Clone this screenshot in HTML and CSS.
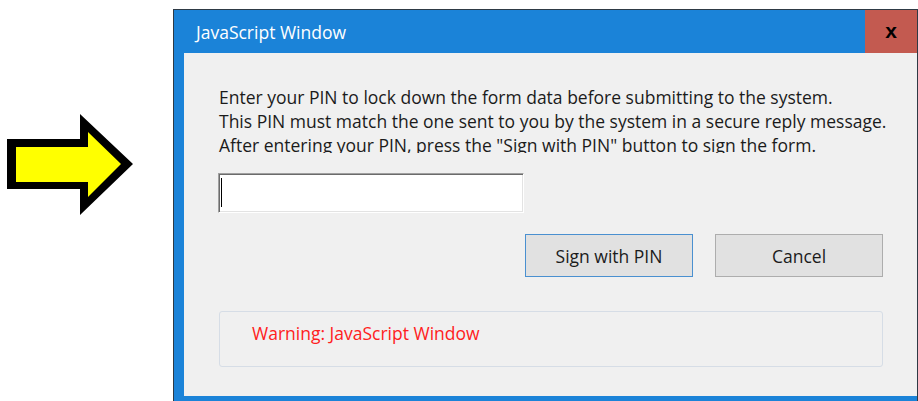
FILE: index.html
```html
<!DOCTYPE html>
<html lang="en">
<head>
<meta charset="utf-8">
<title>JavaScript Window</title>
<link rel="stylesheet" href="styles.css">
</head>
<body>
<div class="stage">
  <div class="pointer">
    <svg class="arrow" width="173" height="401" viewBox="0 0 173 401" aria-hidden="true">
      <polygon points="7,139 80,139 80,114 133,164 80,215 80,189 7,189" fill="#000"/>
      <polygon points="16,147 88,147 88,132 121,164 88,197 88,182 16,182" fill="#ffff00"/>
    </svg>
  </div>
  <div class="window">
    <div class="titlebar">
      <span class="title">JavaScript Window</span>
      <span class="close">x</span>
    </div>
    <div class="client">
      <div class="message">
        <p>Enter your PIN to lock down the form data before submitting to the system.</p>
        <p>This PIN must match the one sent to you by the system in a secure reply message.</p>
        <p>After entering your PIN, press the "Sign with PIN" button to sign the form.</p>
      </div>
      <div class="pin-field"><span class="caret"></span></div>
      <div class="actions">
        <button class="btn btn-default" type="button">Sign with PIN</button>
        <button class="btn" type="button">Cancel</button>
      </div>
      <div class="warning">Warning: JavaScript Window</div>
    </div>
  </div>
</div>
</body>
</html>
```

FILE: styles.css
```css
html, body {
  margin: 0;
  padding: 0;
  background: #ffffff;
  height: 100%;
  overflow: hidden;
}

body {
  font-family: "Open Sans", "Noto Sans", sans-serif;
  color: #1b1b1b;
}

.stage {
  display: flex;
  width: 918px;
  height: 401px;
}

.pointer {
  width: 173px;
  flex: none;
}

.arrow {
  display: block;
}

/* dialog frame */
.window {
  flex: none;
  width: 743px;
  margin-top: 9px;
  height: 392px;
  border: 1px solid #2e3a45;
  border-bottom: none;
  background: #1b83d8;
  display: flex;
  flex-direction: column;
}

.titlebar {
  height: 43px;
  flex: none;
  display: flex;
  align-items: center;
  justify-content: space-between;
}

.title {
  padding-left: 22px;
  color: #ffffff;
  font-size: 17.5px;
  padding-top: 1px;
}

.close {
  width: 52px;
  height: 43px;
  margin-top: -1px;
  background: #c35a50;
  color: #000;
  font-family: "Liberation Sans", Arial, sans-serif;
  font-weight: bold;
  font-size: 21px;
  line-height: 41px;
  text-align: center;
}

.client {
  margin-left: 10px;
  height: 343px;
  background: #f0f0f0;
  padding: 32px 34px 0 34px;
  box-sizing: border-box;
}

/* the last line is partly hidden by the fixed-height message area */
.message {
  height: 68px;
  overflow: hidden;
  margin-right: -30px;
  padding-left: 1px;
  font-size: 17.5px;
  line-height: 24px;
}

.message p {
  margin: 0;
  white-space: nowrap;
}

.pin-field {
  margin-top: 20px;
  width: 306px;
  height: 40px;
  box-sizing: border-box;
  background: #ffffff;
  border: 1px solid;
  border-color: #a0a0a0 #ffffff #ffffff #a0a0a0;
  box-shadow: inset 1px 1px 0 #6b6b6b, inset -1px -1px 0 #e3e3e3;
  padding: 4px 0 0 2px;
}

.caret {
  display: block;
  width: 1px;
  height: 29px;
  background: #000;
}

.actions {
  margin-top: 21px;
  display: flex;
  justify-content: flex-end;
  gap: 22px;
}

.btn {
  width: 168px;
  height: 43px;
  background: #e1e1e1;
  border: 1px solid #adadad;
  font-family: inherit;
  font-size: 17.5px;
  color: #1b1b1b;
  padding: 0;
}

.btn-default {
  border-color: #4a90d0;
}

.warning {
  margin-top: 34px;
  margin-left: 1px;
  height: 56px;
  box-sizing: border-box;
  border: 1px solid #d6dde6;
  border-radius: 3px;
  padding-left: 32px;
  color: #ff2020;
  font-size: 17.5px;
  line-height: 43px;
}
```
